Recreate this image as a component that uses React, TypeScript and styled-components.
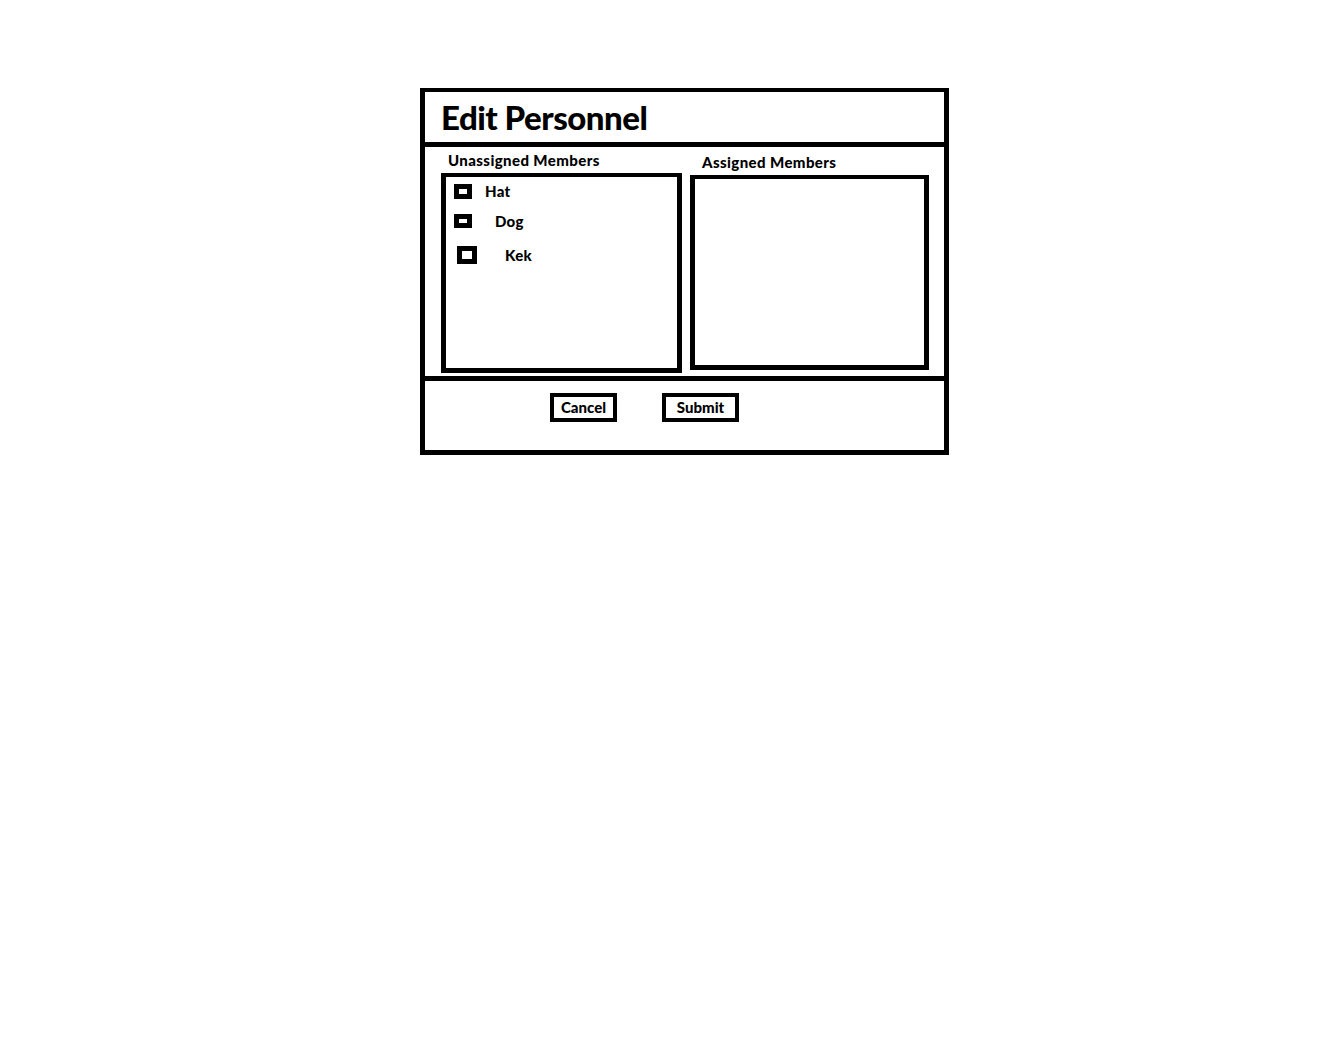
import styled, { createGlobalStyle } from "styled-components";

const Global = createGlobalStyle`
    body {
        margin: 0;
        background: #fff;
        font-family: Lato, "Open Sans", sans-serif;
        color: #000;
    }
`;

const Page = styled.div`
    padding: 88px 0 0 420px;
`;

const Dialog = styled.div`
    width: 529px;
    box-sizing: border-box;
    border: 5px solid #000;
    border-top-width: 4px;
    display: flex;
    flex-direction: column;
`;

const Header = styled.div`
    height: 50px;
    border-bottom: 5px solid #000;
    display: flex;
    align-items: center;
    padding-left: 16px;
`;

const Title = styled.h1`
    margin: 0;
    font-size: 33px;
    font-weight: 900;
    letter-spacing: -0.5px;
    line-height: 1;
`;

const Body = styled.div`
    height: 234px;
    border-bottom: 5px solid #000;
    display: grid;
    grid-template-columns: 241px 239px;
    column-gap: 8px;
    padding-left: 16px;
    box-sizing: border-box;
`;

const Column = styled.div<{ $top: number }>`
    display: flex;
    flex-direction: column;
    padding-top: ${(p) => p.$top}px;
`;

const Label = styled.div<{ $indent: number }>`
    font-size: 15px;
    font-weight: 900;
    line-height: 18px;
    height: 22px;
    padding-left: ${(p) => p.$indent}px;
    letter-spacing: 0.4px;
    white-space: nowrap;
`;

const ListBox = styled.div<{ $h: number }>`
    height: ${(p) => p.$h}px;
    box-sizing: border-box;
    border: 5px solid #000;
    border-top-width: 4px;
    display: flex;
    flex-direction: column;
`;

const Item = styled.div<{ $box: number; $gap: number; $h: number }>`
    display: flex;
    align-items: center;
    height: ${(p) => p.$h}px;
    padding-left: ${(p) => p.$box}px;
    gap: ${(p) => p.$gap}px;
    font-size: 15px;
    font-weight: 900;
    letter-spacing: 0.3px;
`;

const Check = styled.span<{ $w: number; $hgt: number }>`
    width: ${(p) => p.$w}px;
    height: ${(p) => p.$hgt}px;
    box-sizing: border-box;
    border: 5px solid #000;
    flex: none;
`;

const Footer = styled.div`
    height: 69px;
    display: flex;
    align-items: flex-start;
    padding: 12px 0 0 125px;
    gap: 45px;
    box-sizing: border-box;
`;

const Button = styled.button<{ $w: number }>`
    width: ${(p) => p.$w}px;
    height: 29px;
    box-sizing: border-box;
    border: 4px solid #000;
    background: #fff;
    font-family: Lato, sans-serif;
    font-size: 15px;
    font-weight: 900;
    padding: 0;
    line-height: 1;
    color: #000;
`;

const members = [
    { name: "Hat", box: 8, gap: 13, w: 18, h: 15, row: 28 },
    { name: "Dog", box: 8, gap: 23, w: 18, h: 14, row: 32 },
    { name: "Kek", box: 11, gap: 28, w: 20, h: 18, row: 36 },
];

export default function App() {
    return (
        <Page>
            <Global />
            <Dialog>
                <Header>
                    <Title>Edit Personnel</Title>
                </Header>
                <Body>
                    <Column $top={4}>
                        <Label $indent={7}>Unassigned Members</Label>
                        <ListBox $h={200}>
                            {members.map((m) => (
                                <Item key={m.name} $box={m.box} $gap={m.gap} $h={m.row}>
                                    <Check $w={m.w} $hgt={m.h} />
                                    {m.name}
                                </Item>
                            ))}
                        </ListBox>
                    </Column>
                    <Column $top={6}>
                        <Label $indent={12}>Assigned Members</Label>
                        <ListBox $h={195} />
                    </Column>
                </Body>
                <Footer>
                    <Button $w={67}>Cancel</Button>
                    <Button $w={77}>Submit</Button>
                </Footer>
            </Dialog>
        </Page>
    );
}
